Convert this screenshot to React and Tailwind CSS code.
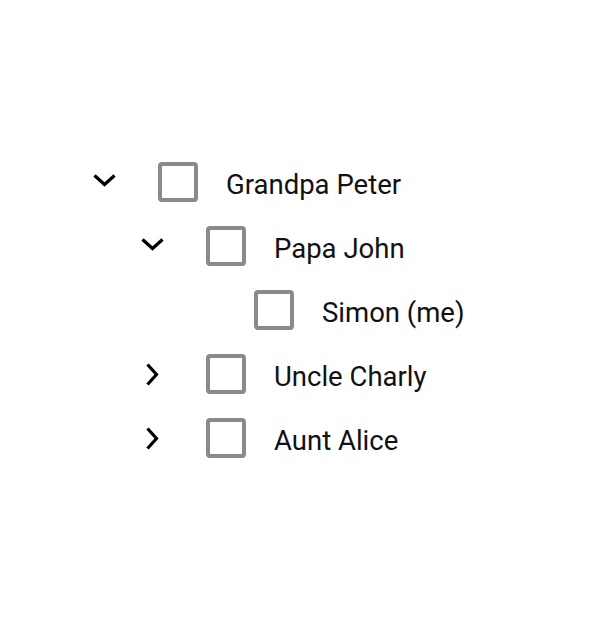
const tree = [
  { label: "Grandpa Peter", level: 0, state: "open" },
  { label: "Papa John", level: 1, state: "open" },
  { label: "Simon (me)", level: 2, state: "leaf" },
  { label: "Uncle Charly", level: 1, state: "closed" },
  { label: "Aunt Alice", level: 1, state: "closed" },
];

const indent = ["pl-[92px]", "pl-[140px]", "pl-[188px]"];

function Chevron({ state }) {
  if (state === "leaf") return <span className="w-6 h-6" />;

  return (
    <svg width="24" height="24" viewBox="0 0 24 24" className="shrink-0">
      {state === "open" ? (
        <polyline
          points="2.5,5.5 12.5,14.5 22.5,5.5"
          fill="none"
          stroke="#000"
          strokeWidth="3.2"
        />
      ) : (
        <polyline
          points="7.5,2.5 16.5,12.5 7.5,22.5"
          fill="none"
          stroke="#000"
          strokeWidth="3.2"
        />
      )}
    </svg>
  );
}

export default function App() {
  return (
    <div className="w-[612px] h-[620px] bg-white pt-[150px] font-['Roboto',sans-serif]">
      {tree.map((node) => (
        <div
          key={node.label}
          className={`flex items-center h-16 ${indent[node.level]}`}
        >
          <Chevron state={node.state} />

          <span className="ml-[42px] w-10 h-10 shrink-0 border-4 border-[#8a8a8a] rounded-[4px] bg-white" />

          <span className="ml-[28px] pt-[5px] text-[27.5px] leading-none text-[#111]">
            {node.label}
          </span>
        </div>
      ))}
    </div>
  );
}
